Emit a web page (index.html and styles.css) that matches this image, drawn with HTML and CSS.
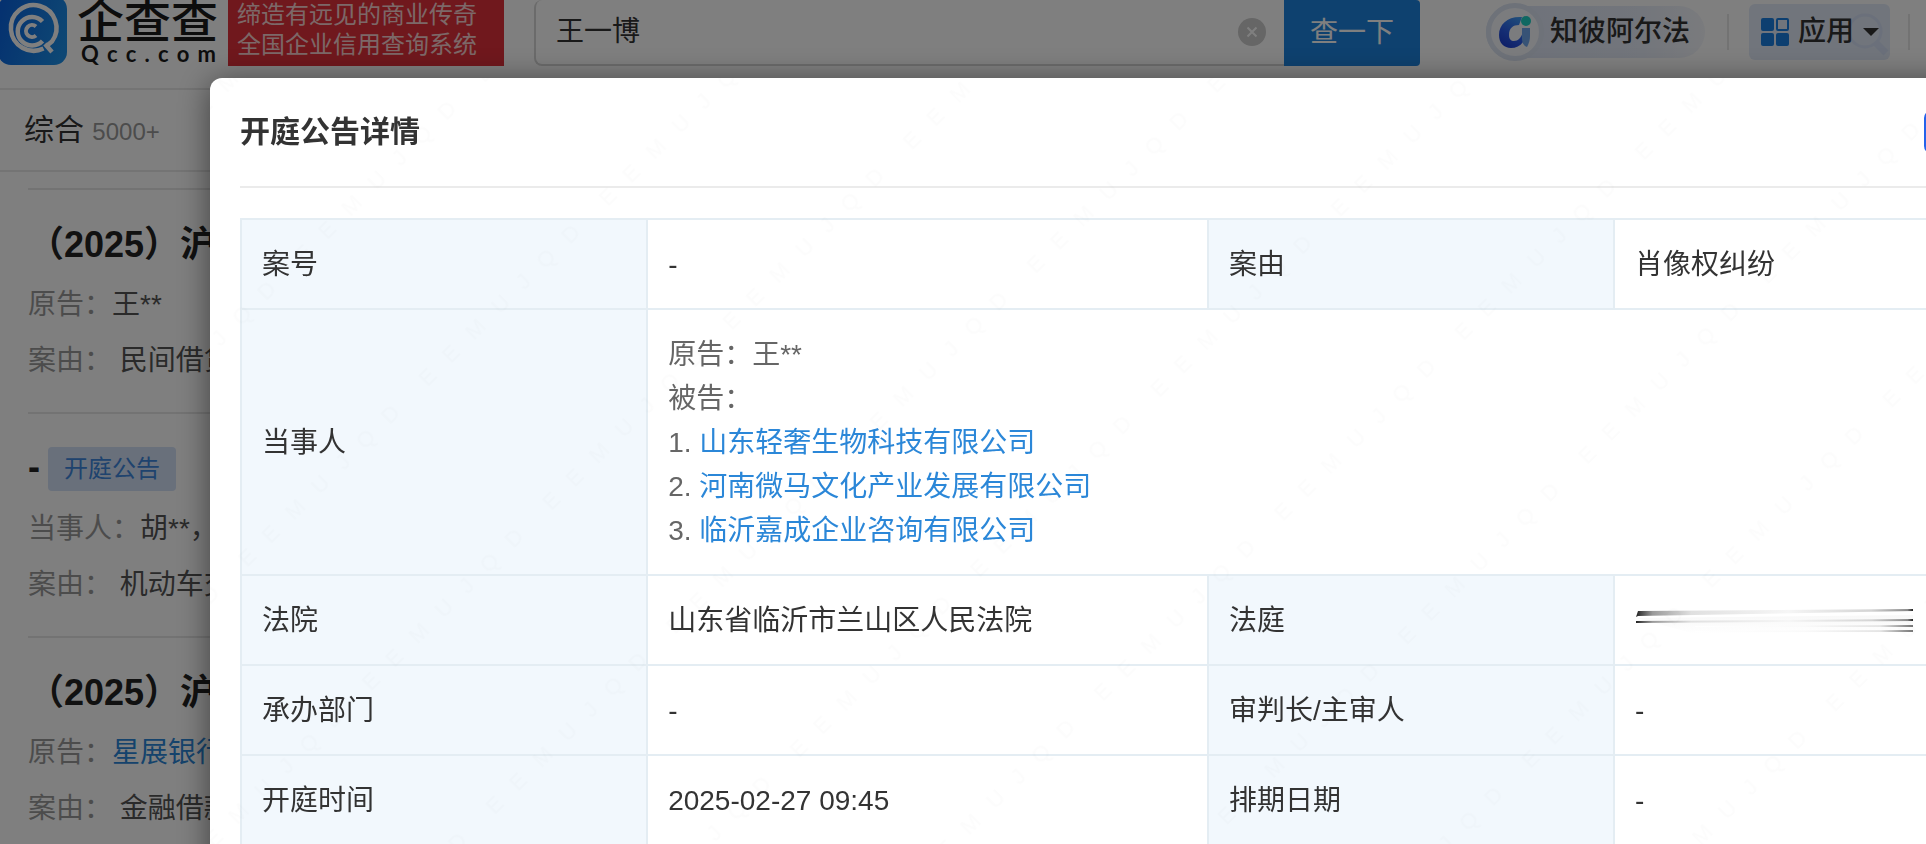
FILE: index.html
```html
<!DOCTYPE html>
<html lang="zh-CN">
<head>
<meta charset="utf-8">
<title>开庭公告详情</title>
<link rel="stylesheet" href="styles.css">
</head>
<body>
<div class="page">
  <header class="topbar">
    <a class="logo" href="#">
      <svg class="logo-mark" viewBox="0 0 67 65" aria-hidden="true">
        <defs>
          <linearGradient id="lg" x1="0" y1="0.3" x2="1" y2="0.6">
            <stop offset="0" stop-color="#0a63e0"/><stop offset="1" stop-color="#1c8fe8"/>
          </linearGradient>
        </defs>
        <rect x="-2" y="-4" width="69" height="69" rx="13" fill="url(#lg)"/>
        <g fill="none" stroke="#fff">
          <path d="M43.5 48.5A22.8 22.8 0 1 1 52 41.500L46.500 46" stroke-width="4.500"/>
          <path d="M45 44L52 52" stroke-width="4.500"/>
          <path d="M42.500 21.500A14.300 14.300 0 1 0 42.500 41" stroke-width="4.500"/>
          <path d="M36 26.500A6 6 0 1 0 36 35.500" stroke-width="4"/>
        </g>
      </svg>
      <span class="logo-text">
        <span class="logo-cn">企查查</span>
        <span class="logo-en"><span>Q</span><span>c</span><span>c</span><span>.</span><span>c</span><span>o</span><span>m</span></span>
      </span>
    </a>
    <div class="slogan">缔造有远见的商业传奇<br>全国企业信用查询系统</div>
    <form class="search">
      <div class="search-box">
        <input class="search-input" type="text" value="王一博" aria-label="查一下">
        <button class="clear" type="button" aria-label="×">
          <svg width="28" height="28" viewBox="0 0 28 28"><circle cx="14" cy="14" r="14" fill="#ccc"/><path d="M9.500 9.500l9 9m0-9l-9 9" stroke="#fff" stroke-width="2"/></svg>
        </button>
      </div>
      <button class="search-btn" type="button">查一下</button>
    </form>
    <nav class="tools">
      <a class="alpha" href="#">
        <span class="alpha-badge">
          <svg width="34" height="34" viewBox="0 0 34 34" aria-hidden="true">
            <defs>
              <linearGradient id="ag" x1="0.800" y1="0" x2="0.300" y2="1">
                <stop offset="0" stop-color="#3f9af5"/><stop offset="0.600" stop-color="#2a5ae8"/><stop offset="1" stop-color="#1d3fd0"/>
              </linearGradient>
            </defs>
            <path d="M24 2C10 1 1 9 1 20c0 8 5 13 12 13 5 0 9-2 12-6V17c-2 6-5 9-9 9-3 0-5-2-5-6 0-7 4-10 10-10z" fill="url(#ag)"/>
            <path d="M24 13h8v8c0 4-1 7-3 11-3-1-5-4-5-8z" fill="#6fa6ec"/>
            <circle cx="28" cy="6" r="5" fill="#1fd0c4"/>
          </svg>
        </span>
        <span>知彼阿尔法</span>
      </a>
      <span class="sep"></span>
      <button class="apps" type="button">
        <svg class="apps-lens" width="42" height="46" viewBox="0 0 42 46" aria-hidden="true"><g fill="none" stroke="#d6e1f6"><circle cx="17" cy="19" r="16" stroke-width="3"/><path d="M28 31l10 10" stroke-width="7"/></g></svg>
        <svg width="28" height="28" viewBox="0 0 28 28" aria-hidden="true"><g fill="#1b7fe0"><rect width="13" height="13" rx="2"/><rect y="15" width="13" height="13" rx="2"/><rect x="15" y="15" width="13" height="13" rx="2"/></g><rect x="16" y="1" width="11" height="11" rx="1" fill="none" stroke="#1b7fe0" stroke-width="2"/></svg>
        <span>应用</span>
        <svg width="16" height="8" viewBox="0 0 16 8" aria-hidden="true"><path d="M0 0h16l-8 8z" fill="#333"/></svg>
      </button>
      <span class="sep"></span>
    </nav>
  </header>
  <div class="tabs"><a class="tab" href="#">综合 <span class="count">5000+</span></a></div>
  <main class="results">
    <article class="item">
      <h2 class="item-title">（2025）沪</h2>
      <p class="line"><span class="label">原告：</span>王**</p>
      <p class="line"><span class="label">案由：</span> 民间借贷纠纷</p>
    </article>
    <article class="item">
      <h2 class="item-title tagged">- <span class="tag">开庭公告</span></h2>
      <p class="line"><span class="label">当事人：</span>胡**，</p>
      <p class="line"><span class="label">案由：</span> 机动车交通</p>
    </article>
    <article class="item">
      <h2 class="item-title">（2025）沪</h2>
      <p class="line"><span class="label">原告：</span><a class="link" href="#">星展银行</a></p>
      <p class="line"><span class="label">案由：</span> 金融借款</p>
    </article>
  </main>
</div>
<div class="mask">
  <section class="modal" role="dialog" aria-labelledby="modal-title">
    <div class="modal-head">
      <h1 class="modal-title" id="modal-title">开庭公告详情</h1>
      <button class="modal-action" type="button" aria-label="操作"></button>
    </div>
    <table class="detail">
      <colgroup><col class="col-key"><col class="col-val"><col class="col-key"><col class="col-val"></colgroup>
      <tbody>
        <tr><th scope="row">案号</th><td>-</td><th scope="row">案由</th><td>肖像权纠纷</td></tr>
        <tr>
          <th scope="row">当事人</th>
          <td class="parties" colspan="3">
            <div>原告：王**</div>
            <div>被告：</div>
            <div>1. <a class="link" href="#">山东轻奢生物科技有限公司</a></div>
            <div>2. <a class="link" href="#">河南微马文化产业发展有限公司</a></div>
            <div>3. <a class="link" href="#">临沂嘉成企业咨询有限公司</a></div>
          </td>
        </tr>
        <tr>
          <th scope="row">法院</th><td>山东省临沂市兰山区人民法院</td><th scope="row">法庭</th>
          <td>
            <svg class="smear" width="280" height="44" viewBox="0 0 280 44" aria-hidden="true">
              <defs>
                <linearGradient id="s1"><stop offset="0" stop-color="#222"/><stop offset="0.060" stop-color="#999"/><stop offset="0.200" stop-color="#e0e0e0"/><stop offset="0.550" stop-color="#f6f6f6"/><stop offset="0.850" stop-color="#d4d4d4"/><stop offset="0.980" stop-color="#888"/><stop offset="1" stop-color="#222"/></linearGradient>
                <linearGradient id="s2"><stop offset="0" stop-color="#fff"/><stop offset="0.500" stop-color="#fafafa"/><stop offset="0.850" stop-color="#e4e4e4"/><stop offset="1" stop-color="#777"/></linearGradient>
                <linearGradient id="s3" x1="0" y1="0" x2="0" y2="1"><stop offset="0" stop-color="#f8f8f8"/><stop offset="1" stop-color="#fff"/></linearGradient>
              </defs>
              <path d="M2 19L278 16v18L60 35z" fill="url(#s3)"/>
              <path d="M3 12L278 10v2L3 17l-2 1z" fill="url(#s1)"/>
              <path d="M1 22L278 20v2L1 24z" fill="url(#s1)"/>
              <path d="M60 27L278 26v2L60 28z" fill="url(#s2)"/>
              <path d="M60 32L278 31v2L60 33z" fill="url(#s2)"/>
            </svg>
          </td>
        </tr>
        <tr><th scope="row">承办部门</th><td>-</td><th scope="row">审判长/主审人</th><td>-</td></tr>
        <tr><th scope="row">开庭时间</th><td>2025-02-27 09:45</td><th scope="row">排期日期</th><td>-</td></tr>
      </tbody>
    </table>
    <svg class="watermark" aria-hidden="true">
      <defs>
        <pattern id="wm" width="255" height="175" patternUnits="userSpaceOnUse" patternTransform="translate(668 50) rotate(-45)">
          <text class="wm-text" x="8" y="40">E&#160;&#160;&#160;E&#160;&#160;&#160;M&#160;&#160;&#160;U&#160;&#160;&#160;J&#160;&#160;&#160;Q&#160;&#160;&#160;D</text>
        </pattern>
      </defs>
      <rect width="100%" height="100%" fill="url(#wm)"/>
    </svg>
  </section>
</div>
</body>
</html>
```
FILE: styles.css
```css
* { box-sizing: border-box; }
body {
  margin: 0;
  height: 100vh;
  overflow: hidden;
  background: #fff;
  color: #333;
  font: 28px/44px "Liberation Sans", "Noto Sans CJK SC", sans-serif;
}
h1, h2, p { margin: 0; }
a { color: inherit; text-decoration: none; }
button, input { font: inherit; color: inherit; border: 0; padding: 0; background: none; }
.link { color: #2b87d8; }

.topbar { display: flex; align-items: flex-start; height: 88px; }
.logo { display: flex; gap: 10px; width: 228px; color: #1a1a1a; }
.logo-mark { width: 67px; height: 65px; }
.logo-text { display: flex; flex-direction: column; }
.logo-cn { font-size: 47px; font-weight: 500; line-height: 44px; }
.logo-en { display: flex; justify-content: space-between; padding: 0 2px 0 4px; font: 700 22px/20px Lato, sans-serif; }
.slogan {
  width: 276px;
  height: 66px;
  padding-left: 9px;
  background: #e0303a;
  color: #f8d0d0;
  font-size: 24px;
  line-height: 30px;
}
.search { display: flex; flex: 1; margin-left: 30px; height: 66px; }
.search-box {
  display: flex;
  flex: 1;
  align-items: center;
  padding: 0 18px 0 20px;
  border: 2px solid #d6d6d6;
  border-top: 0;
  border-right: 0;
  border-radius: 8px 0 0 8px;
}
.search-input { flex: 1; min-width: 0; outline: 0; }
.clear { display: flex; }
.search-btn { width: 136px; background: #1c83de; color: #fff; border-radius: 0 4px 4px 0; }
.tools { display: flex; align-items: center; height: 64px; margin-left: 66px; font-weight: 500; }
.alpha {
  display: flex;
  align-items: center;
  gap: 6px;
  height: 52px;
  padding-right: 15px;
  border-radius: 29px;
  background: linear-gradient(90deg, #dce4f5, #e6ecf8 70%, #f4f6fb);
}
.alpha-badge {
  display: flex;
  align-items: center;
  justify-content: center;
  width: 58px;
  height: 58px;
  border: 5px solid #dce4f2;
  border-radius: 50%;
  background: #f6f8fd;
}
.sep { width: 2px; height: 36px; background: #e6e6e6; margin: 0 20px 0 22px; }
.apps {
  position: relative;
  display: flex;
  align-items: center;
  gap: 9px;
  height: 56px;
  padding: 0 11px 0 12px;
  border-radius: 6px;
  background: #e2eaf8;
  font-weight: 500;
}
.apps > * { position: relative; }
.apps .apps-lens { position: absolute; right: 0; bottom: 2px; }
.tools .sep:last-child { margin: 0 16px 0 18px; }

.tabs { height: 84px; padding: 20px 24px; border: solid #e8e8e8; border-width: 2px 0; }
.tab { display: block; font-size: 30px; line-height: 40px; }
.count { font-size: 24px; color: #999; }

.results { margin: 16px 0 0 28px; }
.item { height: 224px; padding-top: 23px; border-top: 2px solid #e6e6e6; }
.item-title { font-size: 36px; line-height: 64px; color: #222; }
.tagged { line-height: 60px; padding-bottom: 4px; }
.tag {
  display: inline-block;
  vertical-align: middle;
  margin-left: -2px;
  padding: 0 16px;
  border-radius: 4px;
  background: #d2e0f6;
  color: #3e86dc;
  font-size: 24px;
  font-weight: 400;
  line-height: 44px;
}
.line { line-height: 56px; white-space: nowrap; color: #555; }
.label { color: #999; }

.mask { position: fixed; inset: 0; overflow: hidden; background: rgba(0, 0, 0, 0.5); }
.modal {
  position: absolute;
  top: 78px;
  left: 210px;
  right: -280px;
  min-height: 100%;
  padding: 0 30px;
  border-radius: 12px;
  background: #fff;
  box-shadow: 0 4px 32px rgba(0, 0, 0, 0.5);
}
.modal-head {
  display: flex;
  align-items: center;
  justify-content: space-between;
  height: 110px;
  border-bottom: 2px solid #ebebeb;
}
.modal-title { font-size: 30px; font-weight: 700; }
.modal-action { width: 252px; height: 44px; border-radius: 8px; background: #2463eb; }
.detail { width: 100%; margin-top: 30px; border-collapse: collapse; table-layout: fixed; }
.col-key { width: 21%; }
.col-val { width: 29%; }
.detail th, .detail td {
  padding: 23px 20px 21px;
  border: 2px solid #e4edf3;
  font-weight: 400;
  text-align: left;
}
.detail th { background: #f2f8fd; }
.detail .parties { color: #666; }
.smear { display: block; }
.watermark { position: absolute; inset: 0; width: 100%; height: 100%; pointer-events: none; }
.wm-text { font-size: 22px; fill: #000; fill-opacity: 0.01; }
```
